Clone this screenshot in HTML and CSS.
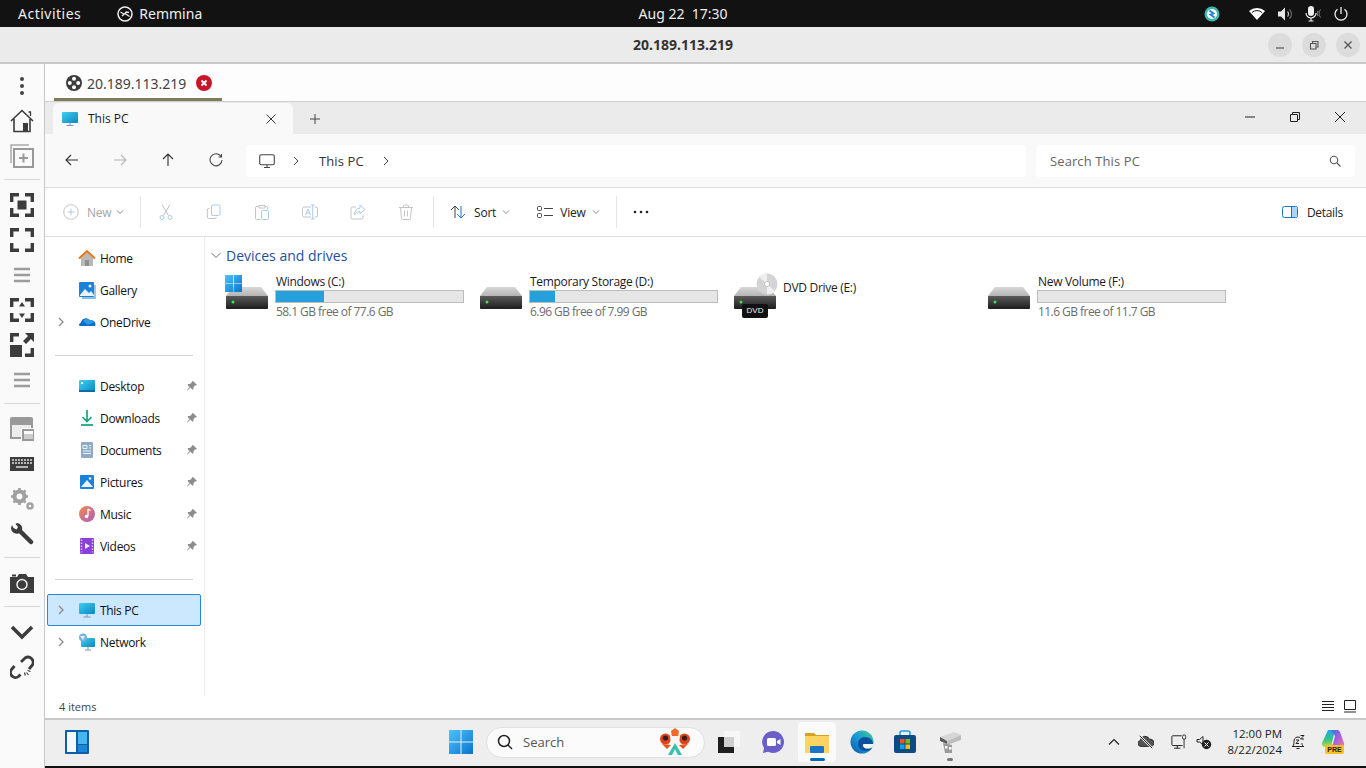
FILE: index.html
```html
<!DOCTYPE html>
<html lang="en">
<head>
<meta charset="utf-8">
<title>20.189.113.219 - Remmina</title>
<link rel="stylesheet" href="styles.css">
</head>
<body>
<svg class="defs" width="0" height="0" aria-hidden="true">
  <defs>
    <linearGradient id="gFront" x1="0" y1="0" x2="0" y2="1"><stop offset="0" stop-color="#5a5a5a"/><stop offset="1" stop-color="#1d1d1d"/></linearGradient>
    <linearGradient id="gTop" x1="0" y1="0" x2="0" y2="1"><stop offset="0" stop-color="#d8d8d8"/><stop offset="1" stop-color="#b4b4b4"/></linearGradient>
    <linearGradient id="gScreen" x1="0" y1="0" x2="1" y2="1"><stop offset="0" stop-color="#3fd0ee"/><stop offset="1" stop-color="#0d87c4"/></linearGradient>
    <linearGradient id="gWin" x1="0" y1="0" x2="1" y2="1"><stop offset="0" stop-color="#4fc3f7"/><stop offset="1" stop-color="#0a74d0"/></linearGradient>
    <linearGradient id="gMusic" x1="0" y1="0" x2="1" y2="1"><stop offset="0" stop-color="#f0894a"/><stop offset="1" stop-color="#b05cc0"/></linearGradient>
    <linearGradient id="gCopL" x1="0" y1="0" x2="0" y2="1"><stop offset="0" stop-color="#1fa8e8"/><stop offset=".55" stop-color="#35c48a"/><stop offset="1" stop-color="#c4d840"/></linearGradient>
    <linearGradient id="gCopR" x1="0" y1="0" x2="1" y2="1"><stop offset="0" stop-color="#3a6be8"/><stop offset=".5" stop-color="#a55fe0"/><stop offset="1" stop-color="#f07aa8"/></linearGradient>
    <linearGradient id="gEdge" x1="1" y1="0" x2="0" y2="1"><stop offset="0" stop-color="#3bd08a"/><stop offset=".5" stop-color="#1a9ad8"/><stop offset="1" stop-color="#0c55a8"/></linearGradient>
    <symbol id="drive" viewBox="0 0 44 48">
      <path d="M8 15h28l7 9H1z" fill="url(#gTop)"/>
      <path d="M1 24h42v12a1 1 0 0 1-1 1H2a1 1 0 0 1-1-1z" fill="url(#gFront)"/>
      <circle cx="8" cy="30" r="1.500" fill="#3fe05a"/>
    </symbol>
    <symbol id="pin" viewBox="0 0 12 12">
      <path d="M7 1l4 4-1 .6-.7-.3L7.400 7.200l.2 1.700-1 .9L4.200 7.400 1.600 10.400l-.6-.5 2.700-2.800L1.400 4.900l.9-1 1.700.2L5.900 2.200l-.2-.7z" fill="#8c8c8c"/>
    </symbol>
    <symbol id="chev" viewBox="0 0 10 10">
      <path d="M3 1l4 4-4 4" fill="none" stroke="#8a8a8a" stroke-width="1.300"/>
    </symbol>
    <symbol id="chevd" viewBox="0 0 8 8">
      <path d="M1 2.500l3 3 3-3" fill="none" stroke="#8a8a8a" stroke-width="1"/>
    </symbol>
    <symbol id="winlogo" viewBox="0 0 24 24">
      <path d="M0 0h11.500v11.500H0zM12.500 0H24v11.500H12.500zM0 12.500h11.500V24H0zM12.500 12.500H24V24H12.500z" fill="url(#gWin)"/>
    </symbol>
    <symbol id="bars" viewBox="0 0 18 16">
      <path d="M1 2h16M1 8h16M1 14h16" stroke="#9c9c9c" stroke-width="2.600" fill="none"/>
    </symbol>
  </defs>
</svg>

<div class="screen">
  <header class="topbar">
    <div class="top-left">
      <span class="top-activities">Activities</span>
      <svg class="ic16" viewBox="0 0 16 16"><circle cx="8" cy="8" r="7" fill="none" stroke="#eee" stroke-width="1.500"/><path d="M3.500 6l4 2.500M8 7.500l4.500 3M5 10l3-2.500 1-1.500 3 .5" fill="none" stroke="#eee" stroke-width="1.300"/></svg>
      <span class="top-app">Remmina</span>
    </div>
    <div class="top-clock">Aug 22&nbsp;&nbsp;17:30</div>
    <div class="top-tray">
      <svg class="ic16 tray-a" viewBox="0 0 16 16"><circle cx="8" cy="8" r="7.500" fill="#3db8b0"/><circle cx="8" cy="8" r="5" fill="#fff"/><path d="M5.500 4.500l4 3-3 1 4 3" fill="none" stroke="#1f7fd0" stroke-width="1.800"/></svg>
      <svg class="ic16 tray-b" viewBox="0 0 16 16"><path d="M0 5a12 12 0 0 1 16 0l-8 9z" fill="#fff"/><path d="M3 6.500a7.500 7.500 0 0 1 10 0" fill="none" stroke="#111" stroke-width="1"/></svg>
      <svg class="ic16 tray-c" viewBox="0 0 16 16"><path d="M1 5.500h3l4-4v13l-4-4H1z" fill="#e8e8e8"/><path d="M10.500 5.500a3.500 3.500 0 0 1 0 5" fill="none" stroke="#bbb" stroke-width="1.200"/><path d="M12.500 3.500a6 6 0 0 1 0 9" fill="none" stroke="#666" stroke-width="1.200"/></svg>
      <svg class="ic16 tray-c" viewBox="0 0 16 16"><rect x="3" y="0" width="6" height="10" rx="3" fill="#eee"/><path d="M1 7a5 5 0 0 0 10 0M6 12v3M3.500 15h5" fill="none" stroke="#eee" stroke-width="1.200"/><path d="M13 5a4 4 0 0 0 0 5M15.500 3.500a6 6 0 0 0 0 8" fill="none" stroke="#888" stroke-width="1"/></svg>
      <svg class="ic16 tray-c" viewBox="0 0 16 16"><path d="M8 1v7M4.500 3.200a6 6 0 1 0 7 0" fill="none" stroke="#eee" stroke-width="1.300"/></svg>
    </div>
  </header>

  <div class="rem-head">
    <div class="rem-title">20.189.113.219</div>
    <div class="rem-btns">
      <button class="circle"><svg class="ic10" viewBox="0 0 10 10"><path d="M1 8h8" stroke="#555" stroke-width="1.200"/></svg></button>
      <button class="circle"><svg class="ic10" viewBox="0 0 10 10"><path d="M1.500 3.500h5.500v5.500H1.500zM3.500 3.500V1.500h5.500v5.500H7" fill="none" stroke="#555" stroke-width="1.100"/></svg></button>
      <button class="circle"><svg class="ic10" viewBox="0 0 10 10"><path d="M1.500 1.500l7 7M8.500 1.500l-7 7" stroke="#555" stroke-width="1.300"/></svg></button>
    </div>
  </div>

  <div class="rem-body">
    <nav class="rail">
      <div class="rb"><svg class="ic24" viewBox="0 0 24 24"><circle cx="12" cy="5" r="2" fill="#444"/><circle cx="12" cy="12" r="2" fill="#444"/><circle cx="12" cy="19" r="2" fill="#444"/></svg></div>
      <div class="rb"><svg class="ic24" viewBox="0 0 24 24"><path d="M1 12L12 1.500 23 12M4 10v12.500h16V10" fill="none" stroke="#3c3c3c" stroke-width="1.600"/><rect x="13" y="14" width="5" height="8.500" fill="#3c3c3c"/><path d="M18.500 3h2v4" fill="none" stroke="#3c3c3c" stroke-width="1.300"/></svg></div>
      <div class="rb"><svg class="ic24" viewBox="0 0 24 24"><path d="M1 19V1h18" fill="none" stroke="#aaa" stroke-width="1.500"/><rect x="4" y="5" width="19" height="18" fill="none" stroke="#999" stroke-width="2"/><path d="M13.500 9.500v9M9 14h9" stroke="#999" stroke-width="2"/></svg></div>
      <div class="rsep"></div>
      <div class="rb"><svg class="ic24" viewBox="0 0 24 24"><path d="M1.700 9V1.700H9M15 1.700h7.300V9M22.300 15v7.300H15M9 22.300H1.700V15" fill="none" stroke="#3c3c3c" stroke-width="3.400"/><rect x="7.500" y="7.500" width="9" height="9" fill="#3c3c3c"/></svg></div>
      <div class="rb"><svg class="ic24" viewBox="0 0 24 24"><path d="M1.700 9V1.700H9M15 1.700h7.300V9M22.300 15v7.300H15M9 22.300H1.700V15" fill="none" stroke="#3c3c3c" stroke-width="3.400"/></svg></div>
      <div class="rb"><svg class="ic18" viewBox="0 0 18 16"><use href="#bars"/></svg></div>
      <div class="rb"><svg class="ic24" viewBox="0 0 24 24"><path d="M1.700 9V1.700H9M15 1.700h7.300V9M22.300 15v7.300H15M9 22.300H1.700V15" fill="none" stroke="#3c3c3c" stroke-width="3.400"/><path d="M12 4l3 4.500H9zM12 20l-3-4.500h6z" fill="#3c3c3c"/></svg></div>
      <div class="rb"><svg class="ic24" viewBox="0 0 24 24"><path d="M1.700 9V1.700H9M22.300 15v7.300H15" fill="none" stroke="#3c3c3c" stroke-width="3.400"/><rect x="0" y="12" width="12" height="12" fill="#3c3c3c"/><path d="M15 0h9v9l-3-3-5 5-3-3 5-5z" fill="#3c3c3c"/></svg></div>
      <div class="rb"><svg class="ic18" viewBox="0 0 18 16"><use href="#bars"/></svg></div>
      <div class="rsep"></div>
      <div class="rb"><svg class="ic24" viewBox="0 0 24 24"><path d="M0 22V2a2 2 0 0 1 2-2h19a2 2 0 0 1 2 2v9H11v11z" fill="#999"/><rect x="2" y="8" width="19" height="3" fill="#ececec"/><rect x="2" y="8" width="9" height="12" fill="#ececec"/><rect x="13" y="13" width="11" height="10" fill="none" stroke="#999" stroke-width="2"/><rect x="14" y="17" width="9" height="5" fill="#ccc"/></svg></div>
      <div class="rb"><svg class="ic24" viewBox="0 0 24 24"><rect y="5" width="24" height="14" fill="#3c3c3c"/><path d="M2 8h20M2 11h20" stroke="#ddd" stroke-width="1.300" stroke-dasharray="2 1"/><path d="M6 15h12" stroke="#ddd" stroke-width="1.500"/></svg></div>
      <div class="rb"><svg class="ic24" viewBox="0 0 24 24"><circle cx="9.500" cy="9.500" r="5" fill="none" stroke="#a0a0a0" stroke-width="4"/><path d="M9.500 1v3M9.500 15v3M1 9.500h3M15 9.500h3M3.500 3.500l2 2M13.500 13.500l2 2M15.500 3.500l-2 2M3.500 15.500l2-2" stroke="#a0a0a0" stroke-width="2.600"/><circle cx="20" cy="19" r="2.500" fill="none" stroke="#a0a0a0" stroke-width="2.500"/></svg></div>
      <div class="rb"><svg class="ic24" viewBox="0 0 24 24"><path d="M10 9l11 11" stroke="#3c3c3c" stroke-width="4.500" stroke-linecap="round"/><path d="M1 6a6 6 0 0 0 9 5l2-2a6 6 0 0 0-5-8l-1.500 1L8 5 6.500 7.500 3.500 6 2 3z" fill="#3c3c3c"/></svg></div>
      <div class="rsep"></div>
      <div class="rb"><svg class="ic24" viewBox="0 0 24 24"><path d="M0 6h7l2-3h7l2 3h6v16H0z" fill="#3c3c3c"/><circle cx="12" cy="13.500" r="5" fill="none" stroke="#eee" stroke-width="1.500"/><rect x="2" y="3.500" width="4" height="2" fill="#3c3c3c"/></svg></div>
      <div class="rsep"></div>
      <div class="rb"><svg class="ic24" viewBox="0 0 24 24"><path d="M2 7l10 10L22 7" fill="none" stroke="#3c3c3c" stroke-width="3.600"/></svg></div>
      <div class="rb"><svg class="ic24" viewBox="0 0 24 24"><path d="M11 7l4-4a5.200 5.200 0 0 1 7 7.500l-3 3.500" fill="none" stroke="#3c3c3c" stroke-width="2.800"/><path d="M10.500 19.500l-2 2a5 5 0 0 1-7-7l3-3.500" fill="none" stroke="#3c3c3c" stroke-width="2.800"/><path d="M14.500 17.500l.8 3M17.500 15.500l3 1M16.500 17.500l2 2.500" stroke="#3c3c3c" stroke-width="1.200"/></svg></div>
    </nav>

    <main class="session">
      <div class="rem-tabs">
        <div class="rem-tab">
          <svg class="ic16" viewBox="0 0 16 16"><circle cx="8" cy="8" r="8" fill="#3c3c3c"/><circle cx="8" cy="3.800" r="2" fill="#fff"/><circle cx="8" cy="12.200" r="2" fill="#fff"/><circle cx="3.800" cy="8" r="2" fill="#fff"/><circle cx="12.200" cy="8" r="2" fill="#fff"/></svg>
          <span class="rem-tab-label">20.189.113.219</span>
          <svg class="ic16" viewBox="0 0 16 16"><circle cx="8" cy="8" r="8" fill="#c7162b"/><path d="M5.500 5.500l5 5M10.500 5.500l-5 5" stroke="#fff" stroke-width="1.800"/></svg>
        </div>
      </div>

      <section class="win">
        <div class="w-title">
          <div class="w-tab">
            <svg class="ic16" viewBox="0 0 16 16"><rect y="1" width="16" height="11" rx="1" fill="url(#gScreen)"/><path d="M8 12v2.500M4.500 14.500h7" stroke="#7a9aa8" stroke-width="1"/></svg>
            <span class="w-tab-label">This PC</span>
            <svg class="ic10" viewBox="0 0 10 10"><path d="M.5.5l9 9M9.500.5l-9 9" stroke="#333" stroke-width="1"/></svg>
          </div>
          <svg class="ic10 w-plus" viewBox="0 0 10 10"><path d="M5 0v10M0 5h10" stroke="#444" stroke-width="1"/></svg>
          <div class="w-ctrls">
            <svg class="ic10" viewBox="0 0 10 10"><path d="M0 5h10" stroke="#222" stroke-width="1"/></svg>
            <svg class="ic10" viewBox="0 0 10 10"><path d="M.5 2.500h7v7h-7zM2.500 2.500V.5h7v7H7.500" fill="none" stroke="#222" stroke-width="1"/></svg>
            <svg class="ic10" viewBox="0 0 10 10"><path d="M0 0l10 10M10 0L0 10" stroke="#222" stroke-width="1"/></svg>
          </div>
        </div>

        <div class="w-nav">
          <div class="nav-btns">
            <svg class="ic14" viewBox="0 0 14 14"><path d="M13 7H1M6 2L1 7l5 5" fill="none" stroke="#333" stroke-width="1.100"/></svg>
            <svg class="ic14" viewBox="0 0 14 14"><path d="M1 7h12M8 2l5 5-5 5" fill="none" stroke="#b5b5b5" stroke-width="1.100"/></svg>
            <svg class="ic14" viewBox="0 0 14 14"><path d="M7 13V1M2 6l5-5 5 5" fill="none" stroke="#333" stroke-width="1.100"/></svg>
            <svg class="ic14" viewBox="0 0 14 14"><path d="M12 3.500A6 6 0 1 0 13 7M12.500 1v3H9.500" fill="none" stroke="#444" stroke-width="1.100"/></svg>
          </div>
          <div class="addr">
            <svg class="ic16" viewBox="0 0 16 16"><rect x=".7" y="1.700" width="14.600" height="10" rx="1.500" fill="none" stroke="#444" stroke-width="1.100"/><path d="M5 14.500h6M8 12v2" stroke="#444" stroke-width="1.100"/></svg>
            <svg class="ic10 addr-ch1" viewBox="0 0 10 10"><path d="M3 1l4 4-4 4" fill="none" stroke="#444" stroke-width="1"/></svg>
            <span class="addr-text">This PC</span>
            <svg class="ic10 addr-ch2" viewBox="0 0 10 10"><path d="M3 1l4 4-4 4" fill="none" stroke="#444" stroke-width="1"/></svg>
          </div>
          <div class="search">
            <span class="search-text">Search This PC</span>
            <svg class="ic12" viewBox="0 0 12 12"><circle cx="5" cy="5" r="3.700" fill="none" stroke="#555" stroke-width="1.100"/><path d="M8 8l3.500 3.500" stroke="#555" stroke-width="1.100"/></svg>
          </div>
        </div>

        <div class="w-cmd">
          <div class="cmd-new">
            <svg class="ic16" viewBox="0 0 16 16"><circle cx="8" cy="8" r="7.300" fill="none" stroke="#c4c4c4"/><path d="M8 4.500v7M4.500 8h7" stroke="#a8cdea"/></svg>
            <span class="cmd-dim">New</span>
            <svg class="ic8" viewBox="0 0 8 8"><use href="#chevd"/></svg>
          </div>
          <div class="cmd-sep"></div>
          <div class="cmd-group">
            <svg class="ic16" viewBox="0 0 16 16"><path d="M4 .5l6.500 11M12 .5L5.500 11.500" fill="none" stroke="#c0c0c0"/><circle cx="4" cy="13.500" r="2" fill="none" stroke="#a8cdea"/><circle cx="12" cy="13.500" r="2" fill="none" stroke="#a8cdea"/></svg>
            <svg class="ic16" viewBox="0 0 16 16"><path d="M3.500 4.500H2.800a1.500 1.500 0 0 0-1.500 1.500v7a1.500 1.500 0 0 0 1.500 1.500h6a1.500 1.500 0 0 0 1.500-1.500" fill="none" stroke="#c4c4c4"/><rect x="5.500" y="1" width="8.500" height="10.500" rx="1.500" fill="none" stroke="#a8cdea"/></svg>
            <svg class="ic16" viewBox="0 0 16 16"><path d="M5 2.500H2.500a1 1 0 0 0-1 1v11a1 1 0 0 0 1 1h4M11 2.500h1.500a1 1 0 0 1 1 1v2M5 1.500h6v2.500H5z" fill="none" stroke="#c4c4c4"/><rect x="7.500" y="6.500" width="7" height="9" rx="1" fill="none" stroke="#a8cdea"/></svg>
            <svg class="ic16" viewBox="0 0 16 16"><path d="M9 3H2a1.500 1.500 0 0 0-1.500 1.500v7A1.500 1.500 0 0 0 2 13h7M12.500 3H14a1.500 1.500 0 0 1 1.500 1.500v7A1.500 1.500 0 0 1 14 13h-1.500" fill="none" stroke="#c4c4c4"/><path d="M3.500 11L6 5l2.500 6M4.500 9h3M10.700 1v14M9 1h3.500M9 15h3.500" fill="none" stroke="#a8cdea"/></svg>
            <svg class="ic16" viewBox="0 0 16 16"><path d="M6 3H2.500A1.500 1.500 0 0 0 1 4.500v9A1.500 1.500 0 0 0 2.500 15h9a1.500 1.500 0 0 0 1.500-1.500V11" fill="none" stroke="#c4c4c4"/><path d="M10 1l5 4.500L10 10V7.500C7 7.500 5.500 9 4.500 11c0-4 2-6.500 5.500-6.800z" fill="none" stroke="#a8cdea"/></svg>
            <svg class="ic16" viewBox="0 0 16 16"><path d="M1 3.500h14M5.500 3.500V2a1 1 0 0 1 1-1h3a1 1 0 0 1 1 1v1.500M2.500 3.500l1 11a1 1 0 0 0 1 1h7a1 1 0 0 0 1-1l1-11M6.500 6.500v6M9.500 6.500v6" fill="none" stroke="#c4c4c4"/></svg>
          </div>
          <div class="cmd-sep sep2"></div>
          <div class="cmd-item sort">
            <svg class="ic16" viewBox="0 0 16 16"><path d="M5 14V2M1 6l4-4 4 4" fill="none" stroke="#444"/><path d="M11 2v12M7 10l4 4 4-4" fill="none" stroke="#1a73c8"/></svg>
            <span>Sort</span>
            <svg class="ic8" viewBox="0 0 8 8"><use href="#chevd"/></svg>
          </div>
          <div class="cmd-item view">
            <svg class="ic16" viewBox="0 0 16 16"><rect x=".5" y="2.500" width="4" height="4" rx="1" fill="none" stroke="#444"/><rect x=".5" y="9.500" width="4" height="4" rx="1" fill="none" stroke="#444"/><path d="M7 4.500h9M7 11.500h9" stroke="#444"/></svg>
            <span>View</span>
            <svg class="ic8" viewBox="0 0 8 8"><use href="#chevd"/></svg>
          </div>
          <div class="cmd-sep sep3"></div>
          <svg class="ic16 cmd-more" viewBox="0 0 16 16"><circle cx="2" cy="8" r="1.300" fill="#222"/><circle cx="8" cy="8" r="1.300" fill="#222"/><circle cx="14" cy="8" r="1.300" fill="#222"/></svg>
          <div class="details">
            <svg class="ic16" viewBox="0 0 16 16"><rect x=".5" y="2.500" width="15" height="11" rx="2" fill="none" stroke="#1a73c8"/><rect x="9.500" y="3" width="5.500" height="10" fill="#a8d4f5"/><path d="M9.500 2.500v11" stroke="#1a73c8"/></svg>
            <span>Details</span>
          </div>
        </div>

        <div class="w-main">
          <aside class="side">
            <div class="row"><span class="ch"></span><svg class="si" viewBox="0 0 18 18"><path d="M3 9v8h12V9L9 3z" fill="#b9b9b9"/><path d="M1 9.500L9 2l8 7.500" fill="none" stroke="#e2761b" stroke-width="2"/><rect x="7" y="11" width="4" height="6" fill="#8f8f8f"/></svg><span class="rl">Home</span></div>
            <div class="row"><span class="ch"></span><svg class="si" viewBox="0 0 18 18"><rect x="1" y="1" width="15" height="15" rx="1" fill="#1a82d8"/><path d="M2 14l5-6 4 4 2-2 3 4v1H2z" fill="#e8f3fb"/><circle cx="12" cy="5" r="1.500" fill="#e8f3fb"/><path d="M17 4v13H4" fill="none" stroke="#6aa9dc" stroke-width="1.300"/></svg><span class="rl">Gallery</span></div>
            <div class="row"><svg class="ch" viewBox="0 0 10 10"><use href="#chev"/></svg><svg class="si" viewBox="0 0 18 18"><path d="M1 12.500a3 3 0 0 1 2-3 5 5 0 0 1 9-2 4 4 0 0 1 5 5.500H2z" fill="#0f6cc8"/><path d="M5 8a5 5 0 0 1 7-1 4 4 0 0 1 4 2l-6 3z" fill="#2b9be8"/></svg><span class="rl">OneDrive</span></div>
            <div class="side-sep"></div>
            <div class="row"><span class="ch"></span><svg class="si" viewBox="0 0 18 18"><rect x="1" y="3" width="16" height="12" rx="1" fill="url(#gScreen)"/><rect x="1" y="13" width="16" height="2" fill="#0c6ea8"/><rect x="3" y="5" width="2" height="2" fill="#fff"/></svg><span class="rl">Desktop</span><svg class="pin" viewBox="0 0 12 12"><use href="#pin"/></svg></div>
            <div class="row"><span class="ch"></span><svg class="si" viewBox="0 0 18 18"><path d="M9 1v11M4.500 8L9 12.500 13.500 8" fill="none" stroke="#1aa57e" stroke-width="1.700"/><path d="M3 16h12" stroke="#1aa57e" stroke-width="1.800"/></svg><span class="rl">Downloads</span><svg class="pin" viewBox="0 0 12 12"><use href="#pin"/></svg></div>
            <div class="row"><span class="ch"></span><svg class="si" viewBox="0 0 18 18"><rect x="3" y="1" width="12" height="16" rx="1" fill="#8faac8"/><path d="M5 4.500h4v3H5zM11 4.500h2M11 7h2M5 10h8M5 12.500h8" stroke="#f2f6fa" fill="none"/></svg><span class="rl">Documents</span><svg class="pin" viewBox="0 0 12 12"><use href="#pin"/></svg></div>
            <div class="row"><span class="ch"></span><svg class="si" viewBox="0 0 18 18"><rect x="2" y="2" width="14" height="14" rx="1" fill="#1a82d8"/><path d="M3 14l6-7 6 7z" fill="#e8f3fb"/><circle cx="12" cy="5.500" r="1.300" fill="#e8f3fb"/></svg><span class="rl">Pictures</span><svg class="pin" viewBox="0 0 12 12"><use href="#pin"/></svg></div>
            <div class="row"><span class="ch"></span><svg class="si" viewBox="0 0 18 18"><circle cx="9" cy="9" r="8" fill="url(#gMusic)"/><path d="M10 4v7" stroke="#fff" stroke-width="1.300"/><circle cx="8.500" cy="11.500" r="1.800" fill="#fff"/><path d="M10 4l2.500 1.500" stroke="#fff" stroke-width="1.300"/></svg><span class="rl">Music</span><svg class="pin" viewBox="0 0 12 12"><use href="#pin"/></svg></div>
            <div class="row"><span class="ch"></span><svg class="si" viewBox="0 0 18 18"><rect x="2" y="1" width="14" height="16" rx="1" fill="#8a3fd8"/><path d="M7 6v6l5-3z" fill="#f4e9ff"/><path d="M3.500 2.500v13M14.500 2.500v13" stroke="#d9c0f4" stroke-width="1.500" stroke-dasharray="1.500 1.500"/></svg><span class="rl">Videos</span><svg class="pin" viewBox="0 0 12 12"><use href="#pin"/></svg></div>
            <div class="side-sep"></div>
            <div class="row selected"><svg class="ch" viewBox="0 0 10 10"><use href="#chev"/></svg><svg class="si" viewBox="0 0 18 18"><rect x="1" y="2" width="16" height="11" rx="1" fill="url(#gScreen)"/><path d="M9 13v3M5.500 16h7" stroke="#7a9aa8"/></svg><span class="rl">This PC</span></div>
            <div class="row"><svg class="ch" viewBox="0 0 10 10"><use href="#chev"/></svg><svg class="si" viewBox="0 0 18 18"><rect x="3" y="5" width="14" height="9" rx="1" fill="url(#gScreen)"/><path d="M10 14v3M7 17h6" stroke="#7a9aa8"/><circle cx="5" cy="4.500" r="4" fill="#7bb2dc"/><path d="M2 3h5l-2 4z" fill="#e4f0f8"/></svg><span class="rl">Network</span></div>
          </aside>

          <div class="content">
            <div class="group-head">
              <svg class="ic10 group-ch" viewBox="0 0 10 10"><path d="M.5 3l4.500 4.500L9.500 3" fill="none" stroke="#777" stroke-width="1"/></svg>
              <span class="group-title">Devices and drives</span>
            </div>
            <div class="drives">
              <div class="drive">
                <div class="d-icon">
                  <svg class="d-svg" viewBox="0 0 44 48"><use href="#drive"/></svg>
                  <svg class="d-win" viewBox="0 0 24 24"><use href="#winlogo"/></svg>
                </div>
                <div class="d-info">
                  <div class="d-name">Windows (C:)</div>
                  <div class="d-bar"><div class="d-fill" style="width:48px"></div></div>
                  <div class="d-free">58.1 GB free of 77.6 GB</div>
                </div>
              </div>
              <div class="drive">
                <div class="d-icon"><svg class="d-svg" viewBox="0 0 44 48"><use href="#drive"/></svg></div>
                <div class="d-info">
                  <div class="d-name">Temporary Storage (D:)</div>
                  <div class="d-bar"><div class="d-fill" style="width:25px"></div></div>
                  <div class="d-free">6.96 GB free of 7.99 GB</div>
                </div>
              </div>
              <div class="drive">
                <div class="d-icon">
                  <svg class="d-svg" viewBox="0 0 44 48"><use href="#drive"/></svg>
                  <svg class="d-disc" viewBox="0 0 22 22"><circle cx="11" cy="11" r="10.500" fill="#d4d4d4"/><path d="M11 11L3 4a10.500 10.500 0 0 1 8-3.500zM11 11l8 7a10.500 10.500 0 0 1-8 3.500z" fill="#efefef"/><circle cx="11" cy="11" r="2.500" fill="#fff" stroke="#aaa" stroke-width=".6"/></svg>
                  <span class="d-badge">DVD</span>
                </div>
                <div class="d-info">
                  <div class="d-name single">DVD Drive (E:)</div>
                </div>
              </div>
              <div class="drive">
                <div class="d-icon"><svg class="d-svg" viewBox="0 0 44 48"><use href="#drive"/></svg></div>
                <div class="d-info">
                  <div class="d-name">New Volume (F:)</div>
                  <div class="d-bar"></div>
                  <div class="d-free">11.6 GB free of 11.7 GB</div>
                </div>
              </div>
            </div>
          </div>
        </div>

        <div class="w-status">
          <span class="st-count">4 items</span>
          <div class="st-views">
            <svg class="ic14" viewBox="0 0 14 14"><path d="M1 2.500h12M1 5.500h12M1 8.500h12M1 11.500h12" stroke="#222" stroke-width="1"/></svg>
            <svg class="ic14" viewBox="0 0 14 14"><path d="M1.500 1.500h11v9h-11zM1 13h12" fill="none" stroke="#222" stroke-width="1"/></svg>
          </div>
        </div>
      </section>

      <footer class="taskbar">
        <svg class="tb-widgets" viewBox="0 0 24 24"><rect width="24" height="24" rx="1" fill="#0e5ea8"/><rect x="2" y="2" width="9" height="20" fill="#f5f8fb"/><rect x="13" y="2" width="9" height="12" fill="#45b6f0"/><rect x="13" y="15" width="9" height="7" fill="#1a86d8"/></svg>
        <div class="tb-center">
          <svg class="tb-start" viewBox="0 0 24 24"><use href="#winlogo"/></svg>
          <div class="tb-search">
            <svg class="tb-mag" viewBox="0 0 16 16"><circle cx="7" cy="7" r="5.500" fill="none" stroke="#222" stroke-width="1.500"/><path d="M11 11l4 4" stroke="#222" stroke-width="1.500"/></svg>
            <span class="tb-search-text">Search</span>
            <svg class="tb-doodle" viewBox="0 0 30 28"><circle cx="5.500" cy="11" r="5.500" fill="#d8481f"/><circle cx="24.500" cy="11" r="5.500" fill="#d8481f"/><circle cx="5.500" cy="10" r="2.600" fill="#3a1a1a"/><circle cx="24.500" cy="10" r="2.600" fill="#3a1a1a"/><path d="M15 0l4 3-1 6h-6l-1-6z" fill="#ef6a2a"/><path d="M10 8h10l-1 8h-8z" fill="#f4f4f4"/><path d="M8 27l7-12 7 12z" fill="#35c0a8"/><path d="M12 27l3-6 3 6z" fill="#e8f6f3"/><path d="M2 16l5 5 4-4zM19 17l4 4 5-5z" fill="#e8531f"/></svg>
          </div>
          <svg class="tb-i tb-tv" viewBox="0 0 24 24"><rect x="7" y="1" width="16" height="16" fill="#f7f7f7"/><rect x="1" y="7" width="16" height="16" fill="#1f1f1f"/><rect x="7" y="7" width="10" height="10" fill="#cfcfcf"/></svg>
          <svg class="tb-i tb-chat" viewBox="0 0 24 24"><path d="M12 1a11 11 0 1 1-5 20.800L2 23l1-5A11 11 0 0 1 12 1z" fill="#6a5fc8"/><rect x="6" y="8" width="9" height="8" rx="1.500" fill="#fff"/><path d="M16 11l3.500-2v6L16 13z" fill="#fff"/></svg>
          <div class="tb-active">
            <svg class="tb-i" viewBox="0 0 24 24"><path d="M0 3h9l2 2h13v3H0z" fill="#d9a21b"/><rect y="6" width="24" height="17" fill="#fcd462"/><rect x="5" y="16" width="14" height="7" rx="1" fill="#1a74c8"/></svg>
            <span class="tb-bar"></span>
          </div>
          <svg class="tb-i tb-edge" viewBox="0 0 24 24"><circle cx="12" cy="12" r="11.500" fill="url(#gEdge)"/><path d="M23 14c0-4-3-7-8-7-4 0-7 3-7 7 0 4 4 8 9 7 2 0 4-1 5-3-3 1-7 1-8-2-.5-1 0-2 1-2z" fill="#0c4f9e"/><path d="M23.500 14H14c-1 0-1.500 1-1 2 1 3 5 3 8 2 1.500-1 2.500-2.500 2.500-4z" fill="#eef6f8"/></svg>
          <svg class="tb-i tb-store" viewBox="0 0 24 24"><path d="M7 6V3a2 2 0 0 1 2-2h6a2 2 0 0 1 2 2v3" fill="none" stroke="#2a9fe0" stroke-width="1.600"/><rect x="1" y="5" width="22" height="18" rx="2" fill="#0f4a82"/><rect x="7" y="9" width="4.500" height="4.500" fill="#f25022"/><rect x="12.500" y="9" width="4.500" height="4.500" fill="#7fba00"/><rect x="7" y="14.500" width="4.500" height="4.500" fill="#00a4ef"/><rect x="12.500" y="14.500" width="4.500" height="4.500" fill="#ffb900"/></svg>
          <div class="tb-last">
            <svg class="tb-i" viewBox="0 0 24 24"><path d="M2 7l14-5 7 3-14 6z" fill="#d6d6d6"/><path d="M2 7l7 4v3l-7-3z" fill="#5a5a5a"/><path d="M9 11l14-6v5l-14 5z" fill="#bdbdbd"/><path d="M5 13l9 2v8H7z" fill="#9a9a9a"/><rect x="7" y="16" width="2.500" height="2.500" fill="#fff"/><rect x="11" y="17" width="2.500" height="2.500" fill="#fff"/></svg>
            <span class="tb-dot"></span>
          </div>
        </div>
        <div class="tb-tray">
          <svg class="ic12 t1" viewBox="0 0 12 12"><path d="M1 8.500l5-5 5 5" fill="none" stroke="#222" stroke-width="1.200"/></svg>
          <svg class="ic16 t2" viewBox="0 0 18 18"><path d="M3 14a3.500 3.500 0 0 1-.5-6.800A5.500 5.500 0 0 1 13 6a4 4 0 0 1 1.500 8z" fill="#555" stroke="#222"/><path d="M2 2l14 14" stroke="#f0f0f0" stroke-width="2.500"/><path d="M2 2l14 14" stroke="#222" stroke-width="1.100"/></svg>
          <svg class="ic18 t3" viewBox="0 0 18 18"><path d="M12 2H2a1 1 0 0 0-1 1v9a1 1 0 0 0 1 1h11M7 13v3M3.500 16h7" fill="none" stroke="#222" stroke-width="1.100"/><rect x="13" y="1" width="3.500" height="5" rx="1.700" fill="none" stroke="#222"/><path d="M14.700 6v10" stroke="#222"/></svg>
          <svg class="ic16 t4" viewBox="0 0 16 16"><path d="M1 5.500h2.500L7 2.500v8L3.500 8H1z" fill="none" stroke="#222"/><circle cx="10.500" cy="10.500" r="4.700" fill="#222"/><path d="M8.500 8.500l4 4M12.500 8.500l-4 4" stroke="#fff"/></svg>
          <div class="tb-clock"><div>12:00 PM</div><div>8/22/2024</div></div>
          <svg class="ic16 t5" viewBox="0 0 16 16"><path d="M3 12c1-1 1-3 1-5a4 4 0 0 1 6-3.500M13 12c-1-1-1-2-1-3M2 12.500h12M6.500 14.500h3" fill="none" stroke="#222"/><path d="M6 6h3l-3 3.500h3M10.500 1.500h3.500l-3.500 3.500H14" fill="none" stroke="#222"/></svg>
          <div class="copilot">
            <svg class="cop-svg" viewBox="0 0 24 20"><path d="M7 1h7l-4 17H4a3 3 0 0 1-3-4z" fill="url(#gCopL)"/><path d="M10 1h6a3 3 0 0 1 3 2l4 11a3 3 0 0 1-3 4H9l3-3 2-8z" fill="url(#gCopR)"/></svg>
            <span class="cop-badge">PRE</span>
          </div>
        </div>
      </footer>
    </main>
  </div>
</div>
</body>
</html>
```

FILE: styles.css
```css
* { box-sizing: border-box; }
html, body { margin: 0; padding: 0; }
body { width: 1366px; height: 768px; overflow: hidden; background: #fff; font-family: "Open Sans", "Noto Sans", sans-serif; }
svg { display: block; flex: none; }
.defs { position: absolute; }
.ic8 { width: 8px; height: 8px; }
.ic10 { width: 10px; height: 10px; }
.ic12 { width: 12px; height: 12px; }
.ic14 { width: 14px; height: 14px; }
.ic16 { width: 16px; height: 16px; }
.ic18 { width: 18px; height: 16px; }
.ic24 { width: 24px; height: 24px; }

.screen { display: flex; flex-direction: column; width: 1366px; height: 768px; }

.topbar { flex: none; height: 27px; background: #121212; color: #eee; display: grid; grid-template-columns: 1fr auto 1fr; align-items: center; font-size: 14px; font-family: "Noto Sans", sans-serif; }
.top-left { display: flex; align-items: center; padding-left: 18px; }
.top-activities { margin-right: 36px; letter-spacing: .5px; }
.top-app { margin-left: 6px; }
.top-clock { font-size: 14px; }
.top-tray { display: flex; align-items: center; justify-content: flex-end; padding-right: 17px; }
.tray-a { margin-right: 29px; }
.tray-c { margin-left: 12px; }

.rem-head { flex: none; height: 37px; background: #ebebeb; border-bottom: 2px solid #c9c9c9; display: grid; grid-template-columns: 1fr auto 1fr; align-items: center; }
.rem-title { grid-column: 2; font-size: 14px; font-weight: 700; color: #333; font-family: "Noto Sans", sans-serif; }
.rem-btns { display: flex; justify-content: flex-end; gap: 10px; padding-right: 6px; }
.circle { width: 24px; height: 24px; border: 0; padding: 0; border-radius: 50%; background: #dcdcdc; display: flex; align-items: center; justify-content: center; }

.rem-body { flex: 1; min-height: 0; display: flex; }
.rail { flex: none; width: 45px; background: #fafafa; border-right: 1px solid #c6c6c6; display: flex; flex-direction: column; align-items: center; padding-top: 4px; }
.rb { width: 44px; height: 35px; flex: none; display: flex; align-items: center; justify-content: center; }
.rsep { width: 36px; height: 1px; background: #d8d8d8; margin: 6px 0 7px; flex: none; }

.session { flex: 1; min-width: 0; display: flex; flex-direction: column; background: #fff; }
.rem-tabs { flex: none; height: 37px; background: #fdfdfd; padding-left: 9px; }
.rem-tab { width: 168px; height: 37px; border-bottom: 3px solid #7c7c5c; display: flex; align-items: center; padding: 4px 0 0 12px; color: #444; }
.rem-tab-label { font-size: 14px; margin: 0 10px 0 5px; font-family: "Noto Sans", sans-serif; white-space: nowrap; }

.win { flex: 1; min-height: 0; display: flex; flex-direction: column; color: #1b1b1b; }
.w-title { flex: none; height: 33px; background: #ebebeb; border-top: 1px solid #cfcfcf; display: flex; align-items: flex-end; padding-left: 8px; }
.w-tab { width: 240px; height: 31px; background: #f9f9f9; border-radius: 6px 6px 0 0; display: flex; align-items: center; padding-left: 9px; }
.w-tab-label { font-size: 12px; margin-left: 10px; width: 178px; }
.w-plus { align-self: center; margin-left: 17px; margin-top: 2px; }
.w-ctrls { margin-left: auto; align-self: center; display: flex; gap: 35px; padding-right: 21px; margin-bottom: 2px; }

.w-nav { flex: none; height: 54px; background: #f9f9f9; border-bottom: 1px solid #dedede; display: flex; align-items: center; padding-top: 1px; }
.nav-btns { width: 201px; display: flex; padding-left: 20px; gap: 34px; margin-top: -2px; }
.addr { width: 780px; height: 32px; background: #fff; border-radius: 4px; display: flex; align-items: center; padding-left: 13px; font-size: 13px; color: #333; }
.addr-ch1 { margin-left: 16px; }
.addr-text { margin-left: 18px; letter-spacing: .1px; }
.addr-ch2 { margin-left: 17px; }
.search { width: 319px; height: 32px; margin-left: 10px; background: #fff; border-radius: 4px; display: flex; align-items: center; justify-content: space-between; padding: 0 14px; font-size: 13px; color: #666; letter-spacing: .1px; }

.w-cmd { flex: none; height: 49px; background: #fff; border-bottom: 1px solid #dedede; display: flex; align-items: center; padding-left: 18px; font-size: 12px; letter-spacing: -.2px; }
.cmd-new { display: flex; align-items: center; color: #a5a5a5; width: 77px; }
.cmd-dim { margin: 0 5px 0 8px; }
.cmd-sep { width: 1px; height: 32px; background: #e5e5e5; flex: none; }
.cmd-group { display: flex; gap: 32px; margin-left: 17px; }
.sep2 { margin-left: 19px; }
.cmd-item { display: flex; align-items: center; color: #222; }
.cmd-item span { margin: 0 6px 0 8px; }
.sort { margin-left: 16px; }
.view { margin-left: 27px; }
.view span { margin-left: 7px; }
.sep3 { margin-left: 16px; }
.cmd-more { margin-left: 16px; }
.details { margin-left: auto; padding-right: 23px; display: flex; align-items: center; color: #222; }
.details span { margin-left: 9px; letter-spacing: -.3px; }

.w-main { flex: 1; min-height: 0; display: flex; }
.side { flex: none; width: 160px; border-right: 1px solid #ececec; padding: 5px 3px 0 2px; font-size: 12px; letter-spacing: -.3px; }
.row { height: 32px; display: flex; align-items: center; border: 1px solid transparent; padding-left: 8px; position: relative; color: #111; }
.row.selected { background: #cce8ff; border-color: #2a86d8; border-radius: 2px; }
.ch { width: 10px; height: 10px; flex: none; }
.si { width: 18px; height: 18px; margin-left: 12px; }
.rl { margin-left: 4px; white-space: nowrap; }
.pin { width: 12px; height: 12px; margin-left: auto; margin-right: 2px; }
.side-sep { height: 1px; background: #d4d4d4; margin: 17px 8px 14px; }

.content { flex: 1; min-width: 0; padding: 8px 0 0 6px; }
.group-head { display: flex; align-items: center; height: 20px; }
.group-title { margin-left: 5px; font-size: 14px; color: #1c4fa0; white-space: nowrap; }
.drives { display: grid; grid-template-columns: repeat(4, 254px); padding-left: 14px; margin-top: 8px; }
.drive { display: flex; height: 48px; }
.d-icon { flex: none; width: 44px; height: 48px; position: relative; margin: -1px 6px 0 0; }
.d-svg { width: 44px; height: 48px; }
.d-win { position: absolute; left: 0; top: 3px; width: 17px; height: 17px; }
.d-disc { position: absolute; left: 23px; top: 1px; width: 22px; height: 22px; }
.d-badge { position: absolute; left: 9px; top: 32px; width: 26px; height: 14px; background: #111; color: #eee; border-radius: 2px; font-size: 8px; line-height: 14px; text-align: center; font-family: "Liberation Sans", sans-serif; }
.d-info { width: 189px; font-size: 12px; }
.d-name { height: 17px; line-height: 17px; color: #1b1b1b; white-space: nowrap; padding-left: 1px; letter-spacing: -.3px; }
.d-name.single { margin-top: 6px; padding-left: 0; }
.d-bar { height: 13px; background: #e6e6e6; border: 1px solid #bcbcbc; }
.d-fill { height: 100%; background: #26a0da; }
.d-free { height: 17px; line-height: 17px; color: #6d6d6d; white-space: nowrap; padding-left: 1px; letter-spacing: -.55px; }

.w-status { flex: none; height: 22px; display: flex; align-items: center; justify-content: space-between; padding: 0 9px 2px 14px; font-size: 11px; color: #444; background: #fff; }
.st-views { display: flex; gap: 8px; }

.taskbar { flex: none; height: 50px; background: #eeeeee; border-top: 2px solid #c8c8c8; border-bottom: 2px solid #111; display: flex; align-items: center; position: relative; padding-bottom: 2px; }
.tb-widgets { width: 24px; height: 24px; margin-left: 20px; }
.tb-center { display: flex; align-items: center; margin-left: 360px; }
.tb-start { width: 24px; height: 24px; }
.tb-search { width: 219px; height: 31px; margin-left: 13px; background: #fbfbfb; border: 1px solid #e0e0e0; border-radius: 16px; display: flex; align-items: center; padding-left: 10px; font-size: 13px; color: #555; }
.tb-mag { width: 16px; height: 16px; }
.tb-search-text { margin-left: 10px; }
.tb-doodle { width: 30px; height: 28px; margin-left: auto; margin-right: 14px; }
.tb-i { width: 24px; height: 24px; }
.tb-tv { margin-left: 12px; }
.tb-chat { margin-left: 20px; }
.tb-active { width: 38px; height: 40px; margin-left: 13px; background: #fafafa; border-radius: 4px; display: flex; flex-direction: column; align-items: center; justify-content: center; position: relative; }
.tb-bar { position: absolute; left: 12px; bottom: 1px; width: 15px; height: 3px; border-radius: 2px; background: #0067c0; }
.tb-edge { margin-left: 14px; }
.tb-store { margin-left: 19px; }
.tb-last { position: relative; margin-left: 21px; }
.tb-dot { position: absolute; left: 9px; bottom: -7px; width: 6px; height: 3px; border-radius: 2px; background: #777; }
.tb-tray { margin-left: auto; display: flex; align-items: center; padding-right: 21px; }
.t1 { margin-right: 18px; }
.t2 { margin-right: 16px; }
.t3 { margin-right: 8px; }
.t4 { margin-right: 8px; }
.tb-clock { font-size: 11.5px; line-height: 16px; text-align: right; color: #222; width: 62px; margin-right: 8px; }
.t5 { margin-right: 15px; }
.copilot { position: relative; width: 24px; height: 26px; }
.cop-svg { width: 24px; height: 20px; }
.cop-badge { position: absolute; left: 4px; top: 16px; width: 19px; height: 9px; background: #fbbf24; color: #222; border-radius: 2px; font-size: 7px; line-height: 9px; font-weight: 700; text-align: center; font-family: "Liberation Sans", sans-serif; }
```
